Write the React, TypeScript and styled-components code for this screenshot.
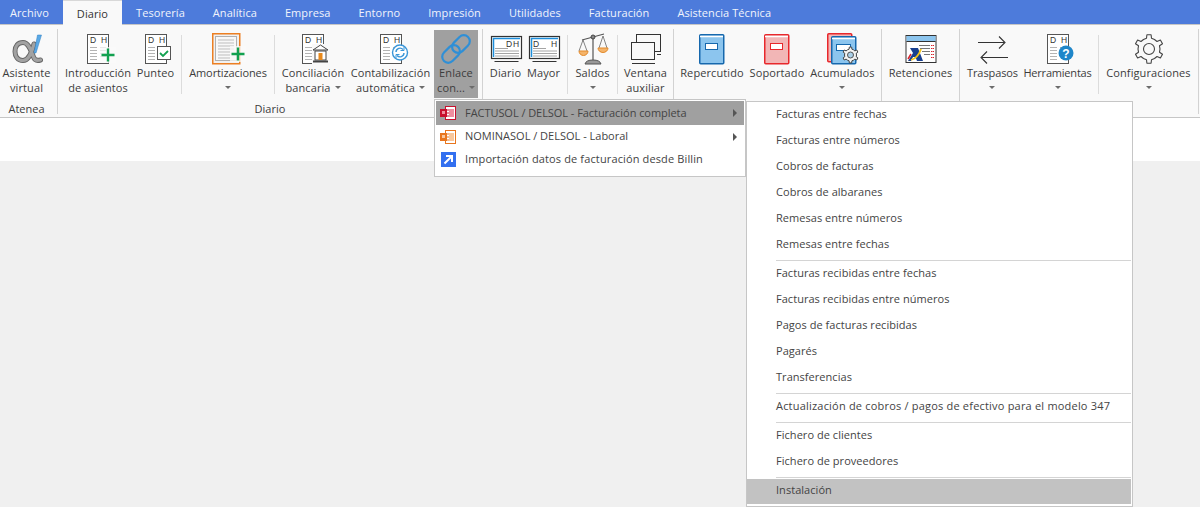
import React from 'react';
import styled, { createGlobalStyle } from 'styled-components';

const GlobalStyle = createGlobalStyle`
  html, body {
    margin: 0;
    padding: 0;
    background: #f0f0f0;
    font-family: 'Open Sans', 'Noto Sans', sans-serif;
    font-size: 11px;
    color: #444;
  }
`;

const SApp = styled.div`
  position: relative;
  width: 1200px;
  height: 507px;
  overflow: hidden;
  display: flex;
  flex-direction: column;
`;

const STabBar = styled.div`
  height: 24px;
  flex: none;
  display: flex;
  padding-left: 10px;
  background: #4d7bdb;
  border-bottom: 1px solid #c6c6c6;
  letter-spacing: 0.07px;
`;

const STab = styled.div<{ $active?: boolean; $first?: boolean }>`
  height: ${p => (p.$active ? '25px' : '24px')};
  box-sizing: border-box;
  padding: 0 14px;
  margin-left: ${p => (p.$first ? '-14px' : '0')};
  display: flex;
  align-items: center;
  color: ${p => (p.$active ? '#333' : '#f1f4fc')};
  background: ${p => (p.$active ? '#f9f9f9' : 'transparent')};
  border-top: ${p => (p.$active ? '1px solid #d8d8d8' : 'none')};
  white-space: nowrap;
  position: relative;
  z-index: 1;
`;

const SRibbon = styled.div`
  height: 92px;
  flex: none;
  display: flex;
  background: #f9f9f9;
  border-bottom: 1px solid #c6c6c6;
`;

const SGroup = styled.div<{ $flush?: boolean }>`
  display: flex;
  flex-direction: column;
  padding: 4px 4px 0 ${p => (p.$flush ? '0' : '4px')};
  position: relative;

  &::after {
    content: '';
    position: absolute;
    right: -1px;
    top: 4px;
    bottom: 3px;
    width: 1px;
    background: #d2d2d2;
  }
`;

const SGroupRow = styled.div`
  display: flex;
  height: 71px;
`;

const SGroupName = styled.div`
  text-align: center;
  line-height: 16px;
  margin-top: 1px;
  color: #3c3c3c;
`;

const SGroupGap = styled.div`
  width: 1px;
  flex: none;
`;

const SItem = styled.div<{ $w: number; $active?: boolean }>`
  width: ${p => p.$w}px;
  flex: none;
  display: flex;
  flex-direction: column;
  align-items: center;
  height: ${p => (p.$active ? '68px' : '71px')};
  margin-top: 1px;
  background: ${p => (p.$active ? '#a0a0a0' : 'transparent')};
`;

const SIconBox = styled.div`
  width: 32px;
  height: 32px;
  margin-top: 3px;
  flex: none;

  svg {
    display: block;
    overflow: visible;
  }
`;

const SLabel = styled.div<{ $spacing: number }>`
  line-height: 15px;
  text-align: center;
  white-space: nowrap;
  color: #3c3c3c;
  letter-spacing: ${p => p.$spacing}px;
`;

const SLine = styled.div`
  height: 15px;
  display: flex;
  align-items: center;
  justify-content: center;
`;

const SCaret = styled.span<{ $inline?: boolean }>`
  display: inline-block;
  width: 0;
  height: 0;
  margin-left: ${p => (p.$inline ? '4px' : '0')};
  border-left: 3px solid transparent;
  border-right: 3px solid transparent;
  border-top: 3px solid #6c6c6c;
`;

const SSep = styled.div`
  width: 1px;
  flex: none;
  height: 59px;
  margin: 6px 4px 0;
  background: #dcdcdc;
`;

const SStrip = styled.div`
  height: 43px;
  flex: none;
  background: #fff;
`;

const SWorkspace = styled.div`
  flex: 1;
  background: #f0f0f0;
`;

const SMenu = styled.div`
  position: absolute;
  left: 434px;
  top: 99px;
  width: 312px;
  height: 78px;
  box-sizing: border-box;
  padding: 1px;
  background: #fff;
  border: 1px solid #c6c6c6;
  z-index: 2;
`;

const SMenuRow = styled.div<{ $active?: boolean }>`
  height: ${p => (p.$active ? '24px' : '23px')};
  display: flex;
  align-items: center;
  padding: 0 7px 0 4px;
  background: ${p => (p.$active ? '#a0a0a0' : 'transparent')};
`;

const SMenuIcon = styled.div`
  width: 16px;
  height: 16px;
  flex: none;
  margin-right: 9px;

  svg {
    display: block;
  }
`;

const SMenuText = styled.div<{ $spacing: number }>`
  flex: 1;
  white-space: nowrap;
  padding-bottom: 2px;
  letter-spacing: ${p => p.$spacing}px;
`;

const SArrow = styled.span`
  width: 0;
  height: 0;
  border-top: 4px solid transparent;
  border-bottom: 4px solid transparent;
  border-left: 4px solid #555;
`;

const SSubMenu = styled.div`
  position: absolute;
  left: 746px;
  top: 101px;
  width: 387px;
  height: 406px;
  box-sizing: border-box;
  padding: 0 1px 1px 0;
  background: #fff;
  border: 1px solid #c6c6c6;
  z-index: 3;
`;

const SSubRow = styled.div<{ $active?: boolean; $long?: boolean }>`
  height: 26px;
  box-sizing: border-box;
  display: flex;
  align-items: center;
  padding: 0 0 4px 29px;
  white-space: nowrap;
  letter-spacing: ${p => (p.$long ? '0.2px' : '0.04px')};
  background: ${p => (p.$active ? '#c2c2c2' : 'transparent')};
  box-shadow: ${p => (p.$active ? 'inset 0 1px #fff' : 'none')};
`;

const SSubSep = styled.div`
  height: 3px;
  box-sizing: border-box;
  margin-left: 29px;
  border-bottom: 1px solid #d4d4d4;
`;

const Page: React.FC = () => (
  <>
    <rect x="5.5" y="1.5" width="21" height="29" fill="#fff" stroke="#555" />
    <text x="8" y="9.500" fontSize="8.500" fontFamily="Liberation Sans" fill="#333">D</text>
    <text x="19" y="9.500" fontSize="8.500" fontFamily="Liberation Sans" fill="#333">H</text>
    <path
      d="M8 14.500h7M8 17.500h7M8 20.500h7M8 23.500h7M8 26.500h7M18 14.500h6M18 17.500h6M18 20.500h6M18 23.500h6"
      stroke="#b4b4b4"
    />
  </>
);

const Plus: React.FC<{ x: number; y: number }> = ({ x, y }) => (
  <>
    <rect x={x - 8} y={y - 8} width="16" height="16" fill="#f9f9f9" opacity="0.75" />
    <path d={`M${x - 6.5} ${y}h13M${x} ${y - 6.5}v13`} stroke="#12a150" strokeWidth="2.4" />
  </>
);

const Svg: React.FC<{ children: React.ReactNode }> = ({ children }) => (
  <svg width="32" height="32" viewBox="0 0 32 32">{children}</svg>
);

const gearPath = (cx: number, cy: number, outer: number, inner: number, teeth = 6) => {
  const pts: string[] = [];
  const step = (Math.PI * 2) / teeth;
  for (let i = 0; i < teeth; i++) {
    const a = i * step - Math.PI / 2;
    const corners: [number, number][] = [
      [a - step * 0.5, inner],
      [a - step * 0.22, inner],
      [a - step * 0.14, outer],
      [a + step * 0.14, outer],
      [a + step * 0.22, inner],
    ];
    corners.forEach(([t, r]) => pts.push(`${(cx + Math.cos(t) * r).toFixed(1)} ${(cy + Math.sin(t) * r).toFixed(1)}`));
  }
  return `M${pts.join('L')}Z`;
};

const ALPHA = 'M23 11C20 22 17 27.500 12 27.500C6.500 27.500 4 23 4 18.500C4 13 7 9.500 12 9.500C18 9.500 20 18 22.500 24C23.500 27 26 28 29.500 27';

const AlphaIcon = () => (
  <Svg>
    <path d={ALPHA} fill="none" stroke="#666" strokeWidth="5" strokeLinecap="round" strokeLinejoin="round" />
    <path d={ALPHA} fill="none" stroke="#a2a2a2" strokeWidth="3.200" strokeLinecap="round" strokeLinejoin="round" />
    <path d="M23 20L26.500 2h4L25 20z" fill="#5aa9e6" stroke="#2f7fc1" strokeWidth="0.5" />
  </Svg>
);

const IntroIcon = () => (
  <Svg>
    <Page />
    <Plus x={26} y={22} />
  </Svg>
);

const PunteoIcon = () => (
  <Svg>
    <Page />
    <rect x="17.5" y="13.5" width="13" height="13" fill="#fff" stroke="#555" />
    <path d="M20 20l3 3 5-5" fill="none" stroke="#12a150" strokeWidth="1.8" />
  </Svg>
);

const AmortIcon = () => (
  <Svg>
    <rect x="0.75" y="0.75" width="27" height="30" fill="#f1f1f1" stroke="#ec7f22" strokeWidth="1.5" />
    <rect x="3.5" y="3.5" width="21" height="24" fill="#f8f8f8" stroke="#b0b0b0" />
    <path d="M6 7h16M6 10h16M6 13h16M6 16h16M6 19h12M6 22h12M6 25h12" stroke="#bdbdbd" />
    <Plus x={26} y={21} />
  </Svg>
);

const BankIcon = () => (
  <Svg>
    <Page />
    <rect x="15" y="11" width="17" height="20" fill="#f9f9f9" />
    <path d="M23.5 12L16 17h15z" fill="#fff" stroke="#444" />
    <rect x="18" y="18" width="11" height="9" fill="#fff" stroke="#444" />
    <rect x="21.5" y="20" width="4" height="7" fill="#e8891c" />
    <path d="M16 28.5h15" stroke="#444" strokeWidth="2" />
  </Svg>
);

const AutoIcon = () => (
  <Svg>
    <Page />
    <circle cx="25" cy="19.5" r="7.5" fill="#fff" stroke="#3a96d8" strokeWidth="1.4" />
    <path d="M21 19a4 4 0 0 1 7-2.500M29 20a4 4 0 0 1-7 2.500" fill="none" stroke="#3a96d8" strokeWidth="1.400" />
    <path d="M29 14v3.500h-3.500M21 25v-3.500h3.500" fill="none" stroke="#3a96d8" strokeWidth="1" />
  </Svg>
);

const LinkIcon = () => (
  <Svg>
    <g fill="none" stroke="#2f8fd6" strokeWidth="2.200" transform="rotate(-45 16 16)">
      <rect x="-1" y="10" width="20" height="12" rx="6" />
      <rect x="13" y="10" width="20" height="12" rx="6" />
    </g>
  </Svg>
);

const LedgerIcon: React.FC<{ left?: boolean }> = ({ left }) => (
  <Svg>
    <rect x="1.500" y="3.500" width="30" height="22" fill="#fff" stroke="#333" strokeWidth="1.200" />
    <path d="M3.500 24V5.500H30" fill="none" stroke="#1e8fdc" strokeWidth="1.500" />
    <text x={left ? 5 : 16} y="13.500" fontSize="8.500" fontFamily="Liberation Sans" fill="#333">D</text>
    <text x="23" y="13.500" fontSize="8.500" fontFamily="Liberation Sans" fill="#333">H</text>
    <path d="M5 15.500h13M5 18h24M5 20.500h24M5 23h24" stroke="#a4a4a4" />
    <path d="M4.500 28.500h24" stroke="#333" />
  </Svg>
);

const ScaleIcon = () => (
  <Svg>
    <path d="M16 3v24M5 7l11-3 11-3" fill="none" stroke="#555" strokeWidth="1.2" />
    <path d="M6 7L2 18M6 7l4 11M26 3l-4 12M26 3l4 12" stroke="#666" strokeWidth="0.8" />
    <path d="M2 18h9a4.500 4.500 0 0 1-9 0z" fill="#f4b46b" stroke="#e38a2a" />
    <path d="M21 15h10a5 4.500 0 0 1-10 0z" fill="#f4b46b" stroke="#e38a2a" />
    <circle cx="16" cy="4" r="2" fill="#888" stroke="#444" />
    <path d="M8 31q1-4 8-4t8 4z" fill="#999" stroke="#555" />
  </Svg>
);

const WindowIcon = () => (
  <Svg>
    <rect x="6.5" y="1.500" width="24" height="17" fill="none" stroke="#333" />
    <rect x="1.500" y="9.500" width="23" height="17" fill="#f9f9f9" stroke="#333" />
    <path d="M2 30.500h23M27 21.500h4" stroke="#333" />
  </Svg>
);

const BookIcon: React.FC<{ red?: boolean }> = ({ red }) => {
  const stroke = red ? '#e8282c' : '#1668ad';
  return (
    <Svg>
      <rect x="3.750" y="1.750" width="24" height="29" rx="1" fill={red ? '#f2b6b6' : '#8cc5ee'} stroke={stroke} strokeWidth="1.500" />
      <path d="M4 3.500h23" stroke="#fff" strokeWidth="1.500" />
      <rect x="9.500" y="10.500" width="12" height="6" fill="#fff" stroke={stroke} />
    </Svg>
  );
};

const StackIcon = () => (
  <Svg>
    <rect x="0.750" y="0.750" width="24" height="28" rx="1" fill="#f2b6b6" stroke="#e8282c" strokeWidth="1.500" />
    <g transform="translate(4 2)">
      <rect x="0.750" y="1.750" width="24" height="27" rx="1" fill="#8cc5ee" stroke="#1668ad" strokeWidth="1.500" />
      <path d="M1 3.500h23" stroke="#fff" strokeWidth="1.500" />
      <rect x="5.500" y="9.500" width="14" height="6" fill="#fff" stroke="#1668ad" />
    </g>
    <path d={gearPath(23.5, 22, 8, 6)} fill="#f4f4f4" stroke="#444" strokeLinejoin="round" />
    <circle cx="23.500" cy="22" r="3" fill="#a9cfe8" stroke="#555" />
  </Svg>
);

const TaxIcon = () => (
  <Svg>
    <rect x="1" y="2.500" width="30" height="27" fill="#fff" stroke="#333" />
    <rect x="1.500" y="3" width="29" height="5" fill="#8cc5ee" />
    <path d="M1.500 8.500h29" stroke="#333" />
    <path d="M14 12.500h11M15 15.500h10M17 18.500h8M19 21.500h6" stroke="#777" />
    <path d="M26 12.500h3M26 15.500h3M26 18.500h3M26 21.500h3M26 24.500h3" stroke="#d8232a" strokeDasharray="1.500 0.500" />
    <path d="M5 15h8l5 13h-6l-1.500-4H8l-2 4H3l5-8z" fill="#173f8f" />
    <path d="M6 27q7-2 10-11" fill="none" stroke="#f5c518" strokeWidth="1.800" />
    <path d="M3 26l3-5" stroke="#d8232a" strokeWidth="1.500" />
  </Svg>
);

const SwapIcon = () => (
  <Svg>
    <path d="M1 9.500h26M22 3.500l6 6-6 6" fill="none" stroke="#333" strokeWidth="1.100" />
    <path d="M31 24.500H5M10 18.500l-6 6 6 6" fill="none" stroke="#333" strokeWidth="1.100" />
  </Svg>
);

const HelpIcon = () => (
  <Svg>
    <Page />
    <circle cx="24" cy="20" r="7.500" fill="#1f86c9" />
    <text x="24" y="24.500" fontSize="12" fontWeight="bold" textAnchor="middle" fontFamily="Liberation Sans" fill="#fff">?</text>
  </Svg>
);

const GearIcon = () => (
  <Svg>
    <path d={gearPath(16, 16, 14.5, 11)} fill="none" stroke="#444" strokeWidth="1.100" strokeLinejoin="round" />
    <circle cx="16" cy="16" r="5.500" fill="none" stroke="#444" strokeWidth="1.100" />
  </Svg>
);

const SheetIcon: React.FC<{ color: string; tint: string }> = ({ color, tint }) => (
  <svg width="16" height="16" viewBox="0 0 16 16">
    <rect x="5.500" y="1.500" width="10" height="13" fill="#fff" stroke={color} />
    <rect x="9" y="4" width="5" height="8" fill={tint} />
    <path d="M6 1.500h3M6 5h3M6 8h3M6 11h3M6 14.500h3" stroke={color} />
    <rect x="0" y="4" width="7" height="8" fill={color} />
    <rect x="2" y="6" width="3" height="3" fill={tint} />
  </svg>
);

const BillinIcon = () => (
  <svg width="16" height="16" viewBox="0 0 16 16">
    <rect x="1" y="0" width="15" height="15" fill="#3370f0" />
    <path d="M4.500 11.500l7-7M6 4h6v6" fill="none" stroke="#fff" strokeWidth="2" />
  </svg>
);

type Part =
  | { kind: 'sep' }
  | {
      kind: 'item';
      w: number;
      icon: React.ReactNode;
      lines: [string, string?];
      caret?: 'inline' | 'below';
      active?: boolean;
      spacing: number;
    };

const item = (
  w: number,
  icon: React.ReactNode,
  lines: [string, string?],
  caret?: 'inline' | 'below',
  active?: boolean,
  spacing = 0.1
): Part => ({ kind: 'item', w, icon, lines, caret, active, spacing });

const sep: Part = { kind: 'sep' };

const groups: { name?: string; flush?: boolean; parts: Part[] }[] = [
  { name: 'Atenea', flush: true, parts: [item(53, <AlphaIcon />, ['Asistente', 'virtual'])] },
  {
    name: 'Diario',
    parts: [
      item(72, <IntroIcon />, ['Introducción', 'de asientos']),
      item(43, <PunteoIcon />, ['Punteo']),
      sep,
      item(84, <AmortIcon />, ['Amortizaciones'], 'below', false, -0.1),
      sep,
      item(68, <BankIcon />, ['Conciliación', 'bancaria'], 'inline'),
      item(87, <AutoIcon />, ['Contabilización', 'automática'], 'inline'),
      item(44, <LinkIcon />, ['Enlace', 'con...'], 'inline', true),
    ],
  },
  {
    parts: [
      item(37, <LedgerIcon />, ['Diario']),
      item(39, <LedgerIcon left />, ['Mayor']),
      sep,
      item(41, <ScaleIcon />, ['Saldos'], 'below'),
      sep,
      item(47, <WindowIcon />, ['Ventana', 'auxiliar']),
    ],
  },
  {
    parts: [
      item(68, <BookIcon />, ['Repercutido']),
      item(62, <BookIcon red />, ['Soportado']),
      item(69, <StackIcon />, ['Acumulados'], 'below'),
    ],
  },
  { parts: [item(69, <TaxIcon />, ['Retenciones'])] },
  {
    parts: [
      item(57, <SwapIcon />, ['Traspasos'], 'below', false, -0.1),
      item(73, <HelpIcon />, ['Herramientas'], 'below', false, -0.2),
      sep,
      item(91, <GearIcon />, ['Configuraciones'], 'below'),
    ],
  },
];

const tabs = ['Archivo', 'Diario', 'Tesorería', 'Analítica', 'Empresa', 'Entorno', 'Impresión', 'Utilidades', 'Facturación', 'Asistencia Técnica'];

const LONG_ROW = 'Actualización de cobros / pagos de efectivo para el modelo 347';

const subMenu: (string | null)[] = [
  'Facturas entre fechas',
  'Facturas entre números',
  'Cobros de facturas',
  'Cobros de albaranes',
  'Remesas entre números',
  'Remesas entre fechas',
  null,
  'Facturas recibidas entre fechas',
  'Facturas recibidas entre números',
  'Pagos de facturas recibidas',
  'Pagarés',
  'Transferencias',
  null,
  LONG_ROW,
  null,
  'Fichero de clientes',
  'Fichero de proveedores',
  null,
  'Instalación',
];

const App: React.FC = () => (
  <SApp>
    <GlobalStyle />
    <STabBar>
      {tabs.map((t, i) => (
        <STab key={t} $active={t === 'Diario'} $first={i === 0}>{t}</STab>
      ))}
    </STabBar>
    <SRibbon>
      {groups.map((g, gi) => (
        <React.Fragment key={gi}>
          <SGroup $flush={g.flush}>
            <SGroupRow>
              {g.parts.map((p, i) =>
                p.kind === 'sep' ? (
                  <SSep key={i} />
                ) : (
                  <SItem key={i} $w={p.w} $active={p.active}>
                    <SIconBox>{p.icon}</SIconBox>
                    <SLabel $spacing={p.spacing}>
                      <SLine>{p.lines[0]}</SLine>
                      {p.lines[1] ? (
                        <SLine>
                          {p.lines[1]}
                          {p.caret === 'inline' && <SCaret $inline />}
                        </SLine>
                      ) : p.caret === 'below' ? (
                        <SLine><SCaret /></SLine>
                      ) : null}
                    </SLabel>
                  </SItem>
                )
              )}
            </SGroupRow>
            {g.name && <SGroupName>{g.name}</SGroupName>}
          </SGroup>
          <SGroupGap />
        </React.Fragment>
      ))}
    </SRibbon>
    <SStrip />
    <SWorkspace />
    <SMenu>
      <SMenuRow $active>
        <SMenuIcon><SheetIcon color="#c8102e" tint="#ef8f9f" /></SMenuIcon>
        <SMenuText $spacing={-0.05}>FACTUSOL / DELSOL - Facturación completa</SMenuText>
        <SArrow />
      </SMenuRow>
      <SMenuRow>
        <SMenuIcon><SheetIcon color="#e8761e" tint="#f8c79d" /></SMenuIcon>
        <SMenuText $spacing={0}>NOMINASOL / DELSOL - Laboral</SMenuText>
        <SArrow />
      </SMenuRow>
      <SMenuRow>
        <SMenuIcon><BillinIcon /></SMenuIcon>
        <SMenuText $spacing={0.13}>Importación datos de facturación desde Billin</SMenuText>
      </SMenuRow>
    </SMenu>
    <SSubMenu>
      {subMenu.map((s, i) =>
        s === null ? (
          <SSubSep key={i} />
        ) : (
          <SSubRow key={i} $active={s === 'Instalación'} $long={s === LONG_ROW}>{s}</SSubRow>
        )
      )}
    </SSubMenu>
  </SApp>
);

export default App;
